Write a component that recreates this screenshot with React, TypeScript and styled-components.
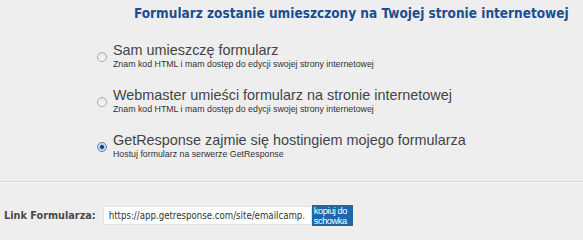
import React from "react";
import styled, { createGlobalStyle } from "styled-components";

const Global = createGlobalStyle`
  html, body { margin: 0; padding: 0; background: #eeeeee; }
  body { font-family: "Liberation Sans", Arial, sans-serif; }
`;

const Page = styled.div`
  width: 583px;
  height: 239px;
  background: #eeeeee;
  display: flex;
  flex-direction: column;
`;

const Title = styled.h2`
  margin: 0;
  padding: 5px 0 0 134px;
  font-family: "DejaVu Sans Condensed", "DejaVu Sans", sans-serif;
  font-stretch: condensed;
  font-weight: bold;
  font-size: 13.5px;
  line-height: 16px;
  color: #1d4e8f;
  white-space: nowrap;
`;

const Options = styled.div`
  display: flex;
  flex-direction: column;
  gap: 17px;
  padding: 21px 0 0 97px;
`;

const Option = styled.label`
  display: flex;
  align-items: center;
  gap: 6px;
`;

const Radio = styled.span<{ $checked?: boolean }>`
  flex: none;
  width: 8px;
  height: 8px;
  border-radius: 50%;
  border: 1px solid ${(p) => (p.$checked ? "#5a7fa8" : "#a9a9a9")};
  background: ${(p) =>
    p.$checked
      ? "radial-gradient(circle, #1f3f6e 0 1.6px, #9fc4ea 2.2px, #d7e8f8 4px)"
      : "linear-gradient(#e4e4e4, #fbfbfb)"};
  margin-top: 1px;
`;

const TextBlock = styled.div`
  display: flex;
  flex-direction: column;
`;

const Label = styled.span`
  font-size: 14.4px;
  line-height: 16px;
  color: #444444;
  white-space: nowrap;
`;

const Sub = styled.span`
  font-size: 8.8px;
  line-height: 12px;
  color: #333333;
  white-space: nowrap;
`;

const Separator = styled.hr`
  margin: 21px 0 0 0;
  border: none;
  border-top: 1px solid #d9d9d2;
  border-bottom: 1px solid #f7f7f4;
  height: 0;
`;

const LinkRow = styled.div`
  display: flex;
  align-items: center;
  padding: 22px 0 0 4px;
`;

const LinkLabel = styled.span`
  font-family: "DejaVu Sans Condensed", "DejaVu Sans", sans-serif;
  font-stretch: condensed;
  font-weight: bold;
  font-size: 10.8px;
  color: #4a4a4a;
  margin-right: 7px;
  white-space: nowrap;
`;

const UrlInput = styled.input`
  box-sizing: border-box;
  width: 209px;
  height: 19px;
  margin: 0;
  padding: 0 2px 0 5px;
  border: 1px solid #e2e2e2;
  background: #ffffff;
  font-family: "DejaVu Sans Condensed", "DejaVu Sans", sans-serif;
  font-stretch: condensed;
  font-size: 9.6px;
  color: #333333;
  outline: none;
`;

const CopyButton = styled.button`
  box-sizing: border-box;
  width: 41px;
  height: 21px;
  margin: 0;
  padding: 0 0 0 2px;
  border: none;
  background: #1a69a8;
  color: #ffffff;
  font-family: "Liberation Sans", Arial, sans-serif;
  font-size: 9.2px;
  letter-spacing: -0.4px;
  text-align: left;
  white-space: nowrap;
  overflow: hidden;
  cursor: pointer;
  display: flex;
  flex-direction: column;
  justify-content: center;
`;

const ButtonLine = styled.span`
  display: block;
  line-height: 10px;
`;

const options = [
  {
    label: "Sam umieszczę formularz",
    sub: "Znam kod HTML i mam dostęp do edycji swojej strony internetowej",
    checked: false,
  },
  {
    label: "Webmaster umieści formularz na stronie internetowej",
    sub: "Znam kod HTML i mam dostęp do edycji swojej strony internetowej",
    checked: false,
  },
  {
    label: "GetResponse zajmie się hostingiem mojego formularza",
    sub: "Hostuj formularz na serwerze GetResponse",
    checked: true,
  },
];

export default function App() {
  return (
    <Page>
      <Global />
      <Title>Formularz zostanie umieszczony na Twojej stronie internetowej</Title>
      <Options>
        {options.map((o) => (
          <Option key={o.label}>
            <Radio $checked={o.checked} />
            <TextBlock>
              <Label>{o.label}</Label>
              <Sub>{o.sub}</Sub>
            </TextBlock>
          </Option>
        ))}
      </Options>
      <Separator />
      <LinkRow>
        <LinkLabel>Link Formularza:</LinkLabel>
        <UrlInput readOnly value="https://app.getresponse.com/site/emailcamp." />
        <CopyButton>
          <ButtonLine>kopiuj do</ButtonLine>
          <ButtonLine>schowka</ButtonLine>
        </CopyButton>
      </LinkRow>
    </Page>
  );
}
